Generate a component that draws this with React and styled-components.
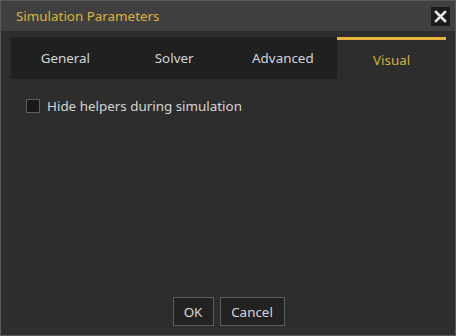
import { useState } from "react";
import styled, { createGlobalStyle } from "styled-components";

const GlobalStyle = createGlobalStyle`
  html, body {
    margin: 0;
    padding: 0;
    background: #2d2d2d;
  }
  * {
    box-sizing: border-box;
  }
`;

const Window = styled.div`
  width: 456px;
  height: 336px;
  border: 1px solid #5a5a5a;
  background-color: #2d2d2d;
  display: flex;
  flex-direction: column;
  font-family: "Noto Sans", "Open Sans", sans-serif;
  font-size: 13.4px;
`;

const TitleBar = styled.div`
  height: 30px;
  flex-shrink: 0;
  background-color: #404040;
  display: flex;
  align-items: center;
  justify-content: space-between;
  padding: 0 5px 0 15px;
`;

const Title = styled.span`
  color: #dcb43c;
  font-size: 13.4px;
`;

const CloseButton = styled.button`
  width: 19px;
  height: 19px;
  border: none;
  padding: 0;
  background-color: #1c1c1c;
  display: flex;
  align-items: center;
  justify-content: center;
  cursor: pointer;
`;

const Body = styled.div`
  flex: 1;
  display: flex;
  flex-direction: column;
  padding: 6px 9px 9px 10px;
`;

const TabBar = styled.div`
  height: 42px;
  display: grid;
  grid-template-columns: repeat(4, 1fr);
  background-color: #202020;
`;

const Tab = styled.div`
  display: flex;
  align-items: center;
  justify-content: center;
  color: ${(props) => (props.active ? "#d6b13e" : "#d2d6dc")};
  background-color: ${(props) => (props.active ? "#2d2d2d" : "transparent")};
  border-top: 3px solid ${(props) => (props.active ? "#e3b53c" : "transparent")};
  padding-bottom: ${(props) => (props.active ? "0" : "3px")};
  cursor: pointer;
`;

const CheckRow = styled.label`
  display: flex;
  align-items: center;
  gap: 7px;
  margin: 18px 0 0 15px;
  color: #d6d6d6;
  cursor: pointer;
`;

const Box = styled.span`
  width: 14px;
  height: 14px;
  background-color: #1a1a1a;
  border: 1px solid #5e5e5e;
  display: inline-block;
`;

const Footer = styled.div`
  margin-top: auto;
  display: flex;
  justify-content: center;
  gap: 6px;
`;

const Button = styled.button`
  height: 29px;
  min-width: ${(props) => props.width};
  background-color: #222222;
  border: 1px solid #5c5c5c;
  color: #d6d8dc;
  font-family: "Noto Sans", "Open Sans", sans-serif;
  font-size: 13.4px;
  padding: 0 9px;
  cursor: pointer;
`;

const tabs = ["General", "Solver", "Advanced", "Visual"];

export default function App() {
  const [active, setActive] = useState("Visual");
  const [hide, setHide] = useState(false);

  return (
    <>
      <GlobalStyle />
      <Window>
        <TitleBar>
          <Title>Simulation Parameters</Title>
          <CloseButton aria-label="Close">
            <svg width="13" height="13" viewBox="0 0 13 13">
              <path
                d="M2 2 L11 11 M11 2 L2 11"
                stroke="#e6e6e6"
                strokeWidth="2.6"
                strokeLinecap="square"
              />
            </svg>
          </CloseButton>
        </TitleBar>
        <Body>
          <TabBar>
            {tabs.map((t) => (
              <Tab key={t} active={t === active} onClick={() => setActive(t)}>
                {t}
              </Tab>
            ))}
          </TabBar>
          <CheckRow onClick={() => setHide(!hide)}>
            <Box />
            Hide helpers during simulation
          </CheckRow>
          <Footer>
            <Button width="41px">OK</Button>
            <Button width="65px">Cancel</Button>
          </Footer>
        </Body>
      </Window>
    </>
  );
}
